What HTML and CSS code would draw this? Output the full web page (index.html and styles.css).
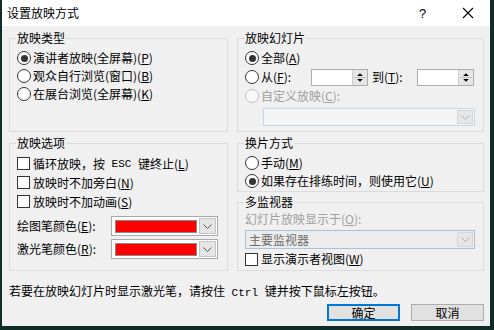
FILE: index.html
```html
<!DOCTYPE html>
<html>
<head>
<meta charset="utf-8">
<link rel="stylesheet" href="styles.css">
</head>
<body>
<div class="dialog">
  <div class="titlebar">
    <span class="title">设置放映方式</span>
    <span class="tbtn">?</span>
    <span class="tbtn"><svg width="12" height="12" viewBox="0 0 12 12"><path d="M1 1L11 11M11 1L1 11" stroke="#000" stroke-width="1.1" fill="none"/></svg></span>
  </div>
  <div class="content">
    <div class="groups">
      <fieldset class="g">
        <legend>放映类型</legend>
        <div class="opt"><span class="radio on"></span>演讲者放映(全屏幕)(<u>P</u>)</div>
        <div class="opt"><span class="radio"></span>观众自行浏览(窗口)(<u>B</u>)</div>
        <div class="opt"><span class="radio"></span>在展台浏览(全屏幕)(<u>K</u>)</div>
      </fieldset>
      <fieldset class="g">
        <legend>放映幻灯片</legend>
        <div class="opt"><span class="radio on"></span>全部(<u>A</u>)</div>
        <div class="opt opt-spin">
          <span class="radio"></span><span class="lbl-from">从(<u>F</u>):</span>
          <span class="spin"><span class="spinb"><svg width="15" height="15" viewBox="0 0 15 15"><path d="M4.5 6h6L7.5 3z" fill="#000"/><path d="M1 7.5h13" stroke="#bdbdbd"/><path d="M4.5 9h6l-3 3z" fill="#000"/></svg></span></span>
          <span class="lbl-to">到(<u>T</u>):</span>
          <span class="spin"><span class="spinb"><svg width="15" height="15" viewBox="0 0 15 15"><path d="M4.5 6h6L7.5 3z" fill="#000"/><path d="M1 7.5h13" stroke="#bdbdbd"/><path d="M4.5 9h6l-3 3z" fill="#000"/></svg></span></span>
        </div>
        <div class="opt disabled"><span class="radio"></span>自定义放映(<u>C</u>):</div>
        <div class="dd dd-custom"><span class="dd-text"></span><span class="dd-btn"><svg width="9" height="5" viewBox="0 0 9 5"><path d="M0.5 0.5L4.5 4.5L8.5 0.5" stroke="#b0b0b0" fill="none"/></svg></span></div>
      </fieldset>
      <fieldset class="g">
        <legend>放映选项</legend>
        <div class="opt opt-c"><span class="check"></span>循环放映，按<span class="asc"> ESC </span>键终止(<u>L</u>)</div>
        <div class="opt opt-c"><span class="check"></span>放映时不加旁白(<u>N</u>)</div>
        <div class="opt opt-c"><span class="check"></span>放映时不加动画(<u>S</u>)</div>
        <div class="crow crow-first"><span class="clbl">绘图笔颜色(<u>E</u>):</span><span class="combo"><span class="swatch"></span><span class="cbtn"><svg width="9" height="5" viewBox="0 0 9 5"><path d="M0.5 0.5L4.5 4.5L8.5 0.5" stroke="#555" fill="none"/></svg></span></span></div>
        <div class="crow"><span class="clbl">激光笔颜色(<u>R</u>):</span><span class="combo"><span class="swatch"></span><span class="cbtn"><svg width="9" height="5" viewBox="0 0 9 5"><path d="M0.5 0.5L4.5 4.5L8.5 0.5" stroke="#555" fill="none"/></svg></span></span></div>
      </fieldset>
      <div class="col-right">
        <fieldset class="g g-adv">
          <legend>换片方式</legend>
          <div class="opt"><span class="radio"></span>手动(<u>M</u>)</div>
          <div class="opt"><span class="radio on"></span>如果存在排练时间，则使用它(<u>U</u>)</div>
        </fieldset>
        <fieldset class="g g-mon">
          <legend>多监视器</legend>
          <div class="mon-lbl disabled">幻灯片放映显示于(<u>O</u>):</div>
          <div class="dd dd-mon"><span class="dd-text">主要监视器</span><span class="dd-btn"><svg width="9" height="5" viewBox="0 0 9 5"><path d="M0.5 0.5L4.5 4.5L8.5 0.5" stroke="#b0b0b0" fill="none"/></svg></span></div>
          <div class="opt opt-c opt-pres"><span class="check"></span>显示演示者视图(<u>W</u>)</div>
        </fieldset>
      </div>
    </div>
    <p class="hint">若要在放映幻灯片时显示激光笔，请按住<span class="asc"> Ctrl </span>键并按下鼠标左按钮。</p>
    <div class="buttons">
      <button class="btn btn-default">确定</button>
      <button class="btn">取消</button>
    </div>
  </div>
</div>
</body>
</html>
```

FILE: styles.css
```css
* { box-sizing: border-box; }
html, body { margin: 0; height: 100%; }
body {
  background: #0f2d26;
  font-family: "Noto Sans CJK SC", "Noto Sans", sans-serif;
  font-size: 12px;
  color: #000;
  overflow: hidden;
}
u { text-decoration: underline; text-underline-offset: 1px; }
.dialog {
  margin-left: 2px;
  width: 488px;
  height: 326px;
  background: #f0f0f0;
  display: flex;
  flex-direction: column;
}
.titlebar {
  height: 26px;
  background: #fff;
  display: flex;
  align-items: center;
  padding-left: 5px;
}
.title { flex: 1; line-height: 12px; }
.tbtn {
  width: 45px;
  height: 26px;
  display: flex;
  align-items: center;
  justify-content: center;
  font-family: "Liberation Sans", sans-serif;
  font-size: 13px;
}
.content {
  padding: 6px 6px 7px 7px;
  display: flex;
  flex-direction: column;
}
.groups {
  display: grid;
  grid-template-columns: 219px 247px;
  grid-template-rows: 100px 134px;
  column-gap: 9px;
  row-gap: 5px;
}
fieldset.g {
  margin: 0;
  padding: 5px 7px 0 7px;
  border: 1px solid #dcdcdc;
  min-width: 0;
}
legend {
  padding: 0 1px;
  margin-left: -1px;
  line-height: 12px;
  height: 12px;
}
.opt {
  display: flex;
  align-items: center;
  height: 18px;
  line-height: 12px;
  white-space: pre;
}
.opt-c { height: 19px; }
.radio {
  width: 14px;
  height: 14px;
  border: 1px solid #333;
  border-radius: 50%;
  background: #fff;
  margin-right: 2px;
  display: flex;
  align-items: center;
  justify-content: center;
  flex: none;
}
.radio.on::after {
  content: "";
  width: 7px;
  height: 7px;
  border-radius: 50%;
  background: #333;
}
.check {
  width: 13px;
  height: 13px;
  border: 1px solid #333;
  background: #fff;
  margin-right: 3px;
  flex: none;
}
.disabled { color: #a0a0a0; }
.disabled .radio { border-color: #c4c4c4; background: #f7f7f7; }
.asc { font-family: "Liberation Mono", monospace; font-size: 11px; white-space: pre; }
.opt-spin { height: 20px; }
.lbl-from { width: 50px; }
.lbl-to { width: 45px; margin-left: 4px; }
.spin {
  width: 57px;
  height: 17px;
  border: 1px solid #adadad;
  background: #fff;
  display: flex;
  justify-content: flex-end;
}
.spinb {
  width: 15px;
  height: 15px;
  background: #e6e6e6;
  border-left: 1px solid #d0d0d0;
  display: flex;
}
.dd {
  height: 19px;
  border: 1px solid #c9d6e6;
  background: #f4f4f4;
  display: flex;
  align-items: stretch;
}
.dd-custom { margin: 3px 1px 0 18px; height: 18px; }
.dd-text { flex: 1; padding-left: 3px; line-height: 17px; color: #6d6d6d; }
.dd-btn {
  width: 16px;
  margin: 1px;
  background: #e6e6e6;
  border: 1px solid #d6d6d6;
  display: flex;
  align-items: center;
  justify-content: center;
}
.crow {
  display: flex;
  align-items: center;
  height: 20px;
  margin-top: 3px;
  line-height: 12px;
}
.crow-first { margin-top: 5px; }
.clbl { width: 94px; white-space: nowrap; }
.combo {
  width: 107px;
  height: 20px;
  border: 1px solid #a9a9a9;
  background: #fff;
  display: flex;
  align-items: center;
  padding: 0 1px 0 3px;
}
.swatch {
  width: 83px;
  height: 13px;
  background: #ff0000;
  border: 1px solid #8a8a8a;
}
.cbtn {
  width: 17px;
  height: 16px;
  margin-left: 2px;
  background: #e5e5e5;
  border: 1px solid #c4c4c4;
  display: flex;
  align-items: center;
  justify-content: center;
}
.col-right {
  display: flex;
  flex-direction: column;
  gap: 4px;
}
.g-adv { height: 55px; }
.g-mon { flex: 1; }
.mon-lbl { line-height: 12px; height: 12px; white-space: nowrap; }
.dd-mon { margin: 5px 1px 0 0; border-color: #a9c1d9; background: #ececec; }
.opt-pres { margin-top: 1px; height: 18px; }
.hint {
  margin: 14px 0 0 0;
  line-height: 12px;
  white-space: nowrap;
}
.buttons {
  margin-top: 5px;
  display: flex;
  justify-content: flex-end;
  gap: 11px;
}
.btn {
  width: 73px;
  height: 17px;
  padding: 0;
  font: inherit;
  line-height: 12px;
  color: #000;
  background: #e1e1e1;
  border: 1px solid #adadad;
}
.btn-default { border: 2px solid #0078d7; }
```
